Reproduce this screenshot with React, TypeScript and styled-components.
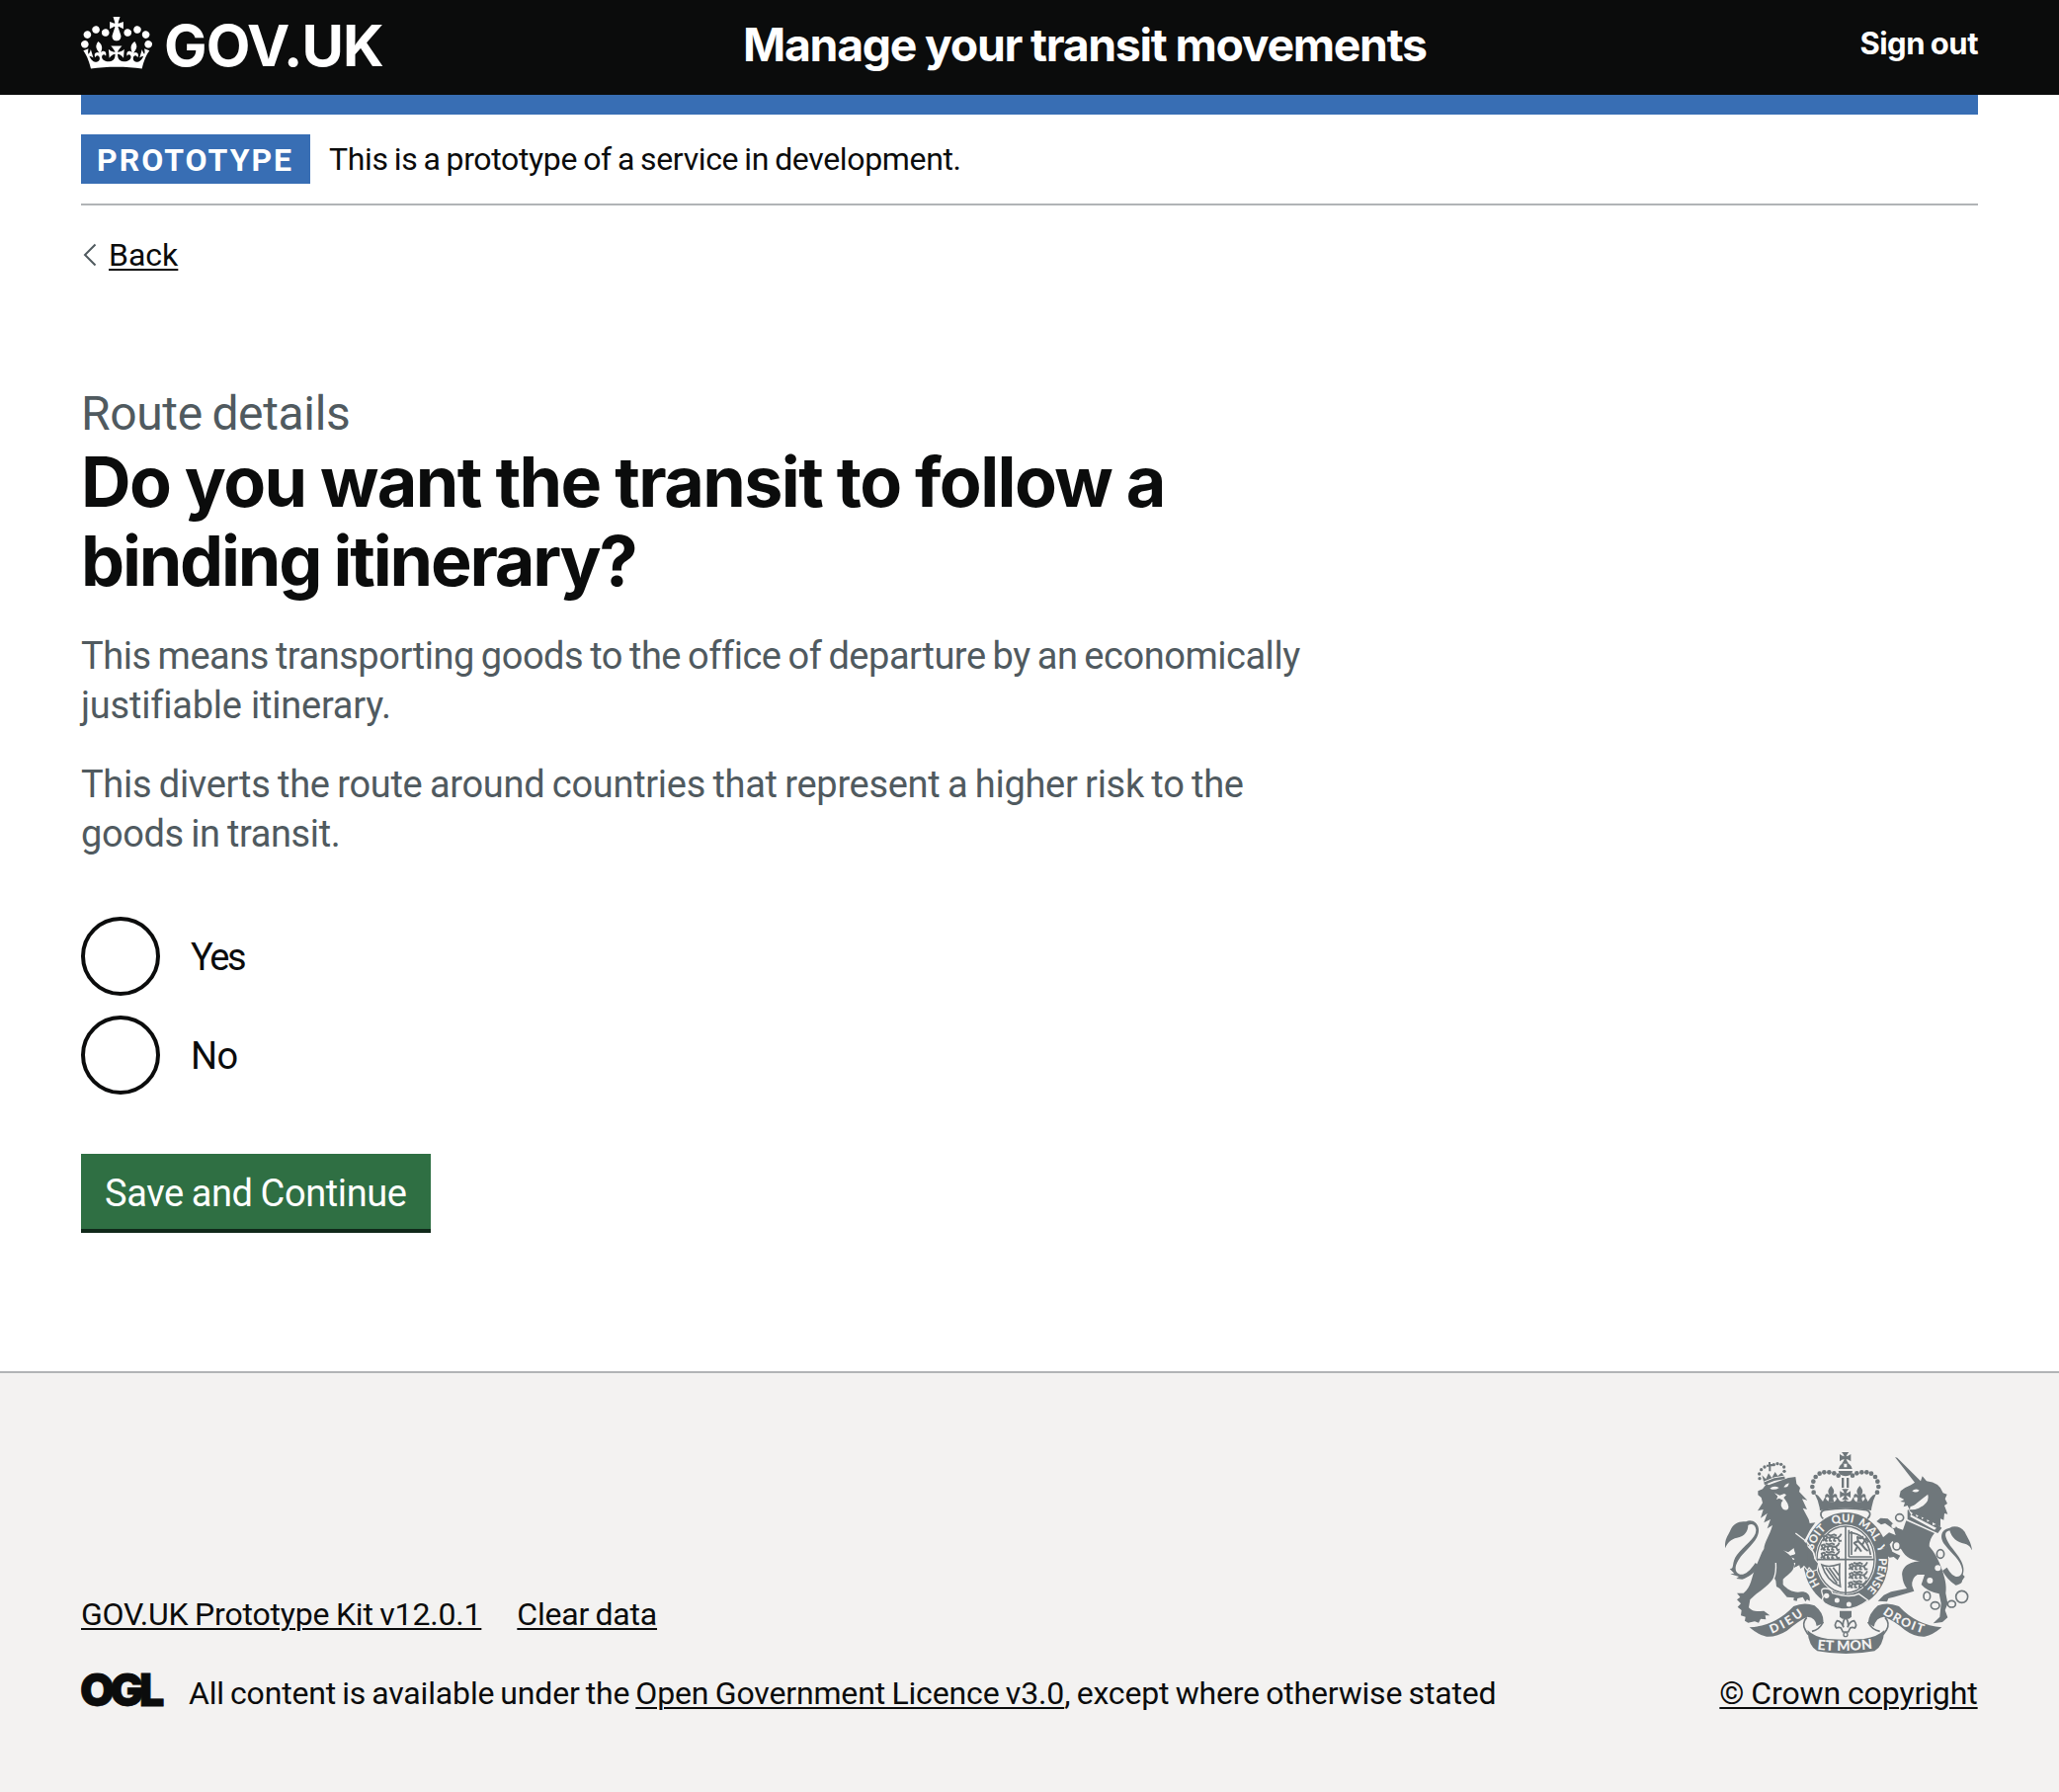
import React from "react";
import styled, { createGlobalStyle } from "styled-components";

const ink = "#0b0c0c";
const secondary = "#505a5f";
const blue = "#386eb4";
const border = "#b1b4b6";
const crestGrey = "#6f777b";
const footerBg = "#f3f2f1";

const GlobalStyle = createGlobalStyle`
  *, *::before, *::after { box-sizing: border-box; }
  body {
    margin: 0;
    background: #fff;
    color: ${ink};
    font-family: Roboto, "Liberation Sans", sans-serif;
    font-size: 32px;
    line-height: 40px;
    -webkit-font-smoothing: antialiased;
  }
  h1, p, ul { margin: 0; padding: 0; }
`;

/* A run of text with its own tracking (letters) and word gap. */
const Run = styled.span<{ $track?: number; $gap?: number; $block?: boolean }>`
  display: ${(p) => (p.$block ? "block" : "inline")};
  white-space: ${(p) => (p.$block ? "nowrap" : "pre-wrap")};
  letter-spacing: ${(p) => p.$track ?? 0}px;
  word-spacing: ${(p) => p.$gap ?? 0}px;
`;

const Page = styled.div`
  display: flex;
  flex-direction: column;
  min-height: 1814px;
`;

const Header = styled.header`
  display: flex;
  align-items: flex-start;
  height: 96px;
  padding: 0 82px;
  background: ${ink};
  color: #fff;
  font-family: Inter, "Liberation Sans", sans-serif;
  font-weight: 700;
`;

const Logo = styled.a`
  display: flex;
  align-items: flex-start;
  width: 670px;
  gap: 12px;
  padding-top: 16px;
  font-size: 58px;
  line-height: 60px;
  letter-spacing: -0.9px;

  svg {
    margin-top: 1px;
  }
`;

const ServiceName = styled.a`
  padding-top: 21px;
  font-size: 46.4px;
  line-height: 49px;
  white-space: nowrap;
`;

const SignOut = styled.a`
  margin-left: auto;
  padding-top: 24px;
  font-size: 31px;
  white-space: nowrap;
`;

const Container = styled.div`
  margin: 0 82px;
`;

const BlueBar = styled.div`
  height: 20px;
  background: ${blue};
`;

const PhaseBanner = styled.div`
  display: flex;
  gap: 19px;
  padding: 20px 0;
  border-bottom: 2px solid ${border};
  line-height: 50px;
`;

const Tag = styled.strong`
  width: 232px;
  height: 50px;
  padding-left: 16px;
  background: ${blue};
  color: #fff;
  font-weight: 700;
  line-height: 52px;
  letter-spacing: 2px;
`;

const Link = styled.a`
  color: ${ink};
  text-decoration: underline;
  text-decoration-thickness: 2px;
  text-underline-offset: 3px;
`;

const BackLink = styled.div`
  display: flex;
  align-items: center;
  gap: 12px;
  margin-top: 30px;

  svg {
    margin-left: 2px;
  }
`;

const Main = styled.main`
  padding: 111px 0 140px;
`;

const Caption = styled.span`
  display: block;
  color: ${secondary};
  font-size: 48px;
  line-height: 59px;
`;

const Heading = styled.h1`
  font-family: Inter, "Liberation Sans", sans-serif;
  font-size: 70px;
  font-weight: 700;
  line-height: 80px;
`;

const Hint = styled.div`
  display: grid;
  gap: 30px;
  margin-top: 31px;
  color: ${secondary};
  font-size: 38px;
  line-height: 50px;
`;

const Radios = styled.div`
  display: grid;
  gap: 20px;
  margin-top: 59px;
`;

const RadioRow = styled.label`
  display: flex;
  gap: 31px;
  height: 80px;
  font-size: 38px;
  line-height: 82px;
`;

const RadioInput = styled.input`
  appearance: none;
  width: 80px;
  height: 80px;
  margin: 0;
  border: 4px solid ${ink};
  border-radius: 50%;
  background: transparent;
`;

const Button = styled.button`
  display: block;
  width: 354px;
  height: 80px;
  margin: 60px 0 0;
  padding: 2px 0 0 24px;
  border: 0;
  border-bottom: 4px solid #10291a;
  background: #2f6f43;
  color: #fff;
  font: 400 38px/76px Roboto, "Liberation Sans", sans-serif;
  text-align: left;
`;

const Footer = styled.footer`
  display: flex;
  flex: 1;
  align-items: flex-start;
  justify-content: space-between;
  padding: 80px 82px;
  border-top: 2px solid ${border};
  background: ${footerBg};
`;

const FooterMeta = styled.div`
  display: flex;
  flex-direction: column;
  justify-content: flex-end;
  gap: 40px;
  height: 264px;
`;

const FooterLinks = styled.div`
  display: flex;
  gap: 36px;
`;

const Licence = styled.div`
  display: flex;
  align-items: flex-start;
`;

const OglMark = styled.span`
  width: 110px;
  margin-left: -1px;
  font-family: Inter, "Liberation Sans", sans-serif;
  font-size: 45px;
  font-weight: 900;
  line-height: 34px;
  letter-spacing: -4.4px;
  -webkit-text-stroke: 0.8px ${ink};
`;

const Copyright = styled.div`
  display: flex;
  flex-direction: column;
  align-items: center;
  gap: 20px;
  width: 262px;
  white-space: nowrap;
`;

const Crown = () => (
  <svg width="72" height="53" viewBox="0 0 132 97" fill="#fff">
    <path d="M25 30.2c3.5 1.5 7.7-.2 9.1-3.7 1.5-3.6-.2-7.8-3.9-9.2-3.6-1.4-7.6.3-9.1 3.9-1.4 3.5.3 7.5 3.9 9zM9 39.5c3.6 1.5 7.8-.2 9.2-3.7 1.5-3.6-.2-7.8-3.9-9.1-3.6-1.5-7.6.2-9.1 3.8-1.4 3.5.3 7.5 3.8 9zM4.4 57.2c3.5 1.5 7.7-.2 9.1-3.8 1.5-3.6-.2-7.7-3.9-9.1-3.5-1.5-7.6.3-9.1 3.8-1.4 3.5.3 7.6 3.9 9.1zm38.3-21.4c3.5 1.5 7.7-.2 9.1-3.8 1.5-3.6-.2-7.7-3.9-9.1-3.6-1.5-7.6.3-9.1 3.8-1.3 3.6.4 7.7 3.9 9.1zm64.4-5.6c-3.6 1.5-7.8-.2-9.1-3.7-1.5-3.6.2-7.8 3.8-9.2 3.6-1.4 7.7.3 9.2 3.9 1.3 3.5-.4 7.5-3.9 9zm15.9 9.3c-3.6 1.5-7.7-.2-9.1-3.7-1.5-3.6.2-7.8 3.7-9.1 3.6-1.5 7.7.2 9.2 3.8 1.5 3.5-.3 7.5-3.8 9zm4.7 17.7c-3.6 1.5-7.8-.2-9.2-3.8-1.5-3.6.2-7.7 3.9-9.1 3.6-1.5 7.7.3 9.2 3.8 1.3 3.5-.4 7.6-3.9 9.1zM89.3 35.8c-3.6 1.5-7.8-.2-9.2-3.8-1.4-3.6.2-7.7 3.9-9.1 3.6-1.5 7.7.3 9.2 3.8 1.4 3.6-.3 7.7-3.9 9.1zM69.7 17.7l8.9 4.7V9.3l-8.9 2.8c-.2-.3-.5-.6-.9-.9L72.4 0H59.6l3.5 11.2c-.3.3-.6.5-.9.9l-8.8-2.8v13.1l8.8-4.7c.3.3.6.7.9.9l-5 15.4v.1c-.2.8-.4 1.6-.4 2.4 0 4.1 3.1 7.5 7 8.1h.2c.3 0 .7.1 1 .1.4 0 .7 0 1-.1h.2c4-.6 7.1-4.1 7.1-8.1 0-.8-.1-1.7-.4-2.4V34l-5.1-15.4c.4-.2.7-.6 1-.9zM66 92.8c16.9 0 32.8 1.1 47.1 3.2 4-16.9 8.9-26.7 14-33.5l-9.6-3.4c1 4.9 1.1 7.2 0 10.2-1.5-1.4-3-4.3-4.2-8.7L108.6 76c2.8-2 5-3.2 7.5-3.3-4.4 9.4-10 11.9-13.6 11.2-4.3-.8-6.3-4.6-5.6-7.9 1-4.7 5.7-5.9 8-.5 4.3-8.7-3-11.4-7.6-8.8 7.1-7.2 7.9-13.5 2.1-21.1-8 6.1-8.1 12.3-4.5 20.8-4.7-5.4-12.1-2.5-9.5 6.2 3.4-5.2 7.9-2 7.2 3.1-.6 4.3-6.4 7.8-13.5 7.2-10.3-.9-10.9-8-11.2-13.8 2.5-.5 7.1 1.8 11 7.3L80.2 60c-4.1 4.4-8 5.3-12.3 5.4 1.4-4.4 8-11.6 8-11.6H55.5s6.4 7.2 7.9 11.6c-4.2-.1-8-1-12.3-5.4l1.4 16.4c3.9-5.5 8.5-7.7 10.9-7.3-.3 5.8-.9 12.8-11.1 13.8-7.2.6-12.9-2.9-13.5-7.2-.7-5 3.8-8.3 7.1-3.1 2.7-8.7-4.6-11.6-9.4-6.2 3.7-8.5 3.6-14.7-4.6-20.8-5.8 7.6-5 13.9 2.2 21.1-4.7-2.6-11.9.1-7.7 8.8 2.3-5.5 7.1-4.2 8.1.5.7 3.3-1.3 7.1-5.7 7.9-3.5.7-9-1.8-13.5-11.2 2.5.1 4.7 1.3 7.5 3.3l-4.7-15.4c-1.2 4.4-2.7 7.2-4.3 8.7-1.1-3-.9-5.3 0-10.2l-9.5 3.4c5 6.9 9.9 16.7 14 33.5 14.8-2.1 30.8-3.2 47.7-3.2z" />
  </svg>
);

const archBeads: [number, number][] = [
  [317, 182], [313, 165], [316, 149], [323, 135], [335, 125], [349, 121], [364, 121], [379, 124], [392, 131],
];

const lionCrownBeads: [number, number][] = [
  [153, 140], [152, 126], [158, 113], [168, 105], [196, 98], [207, 95], [218, 97], [227, 105], [228, 118],
];

const CrownCross = ({ x, y, s = 1 }: { x: number; y: number; s?: number }) => (
  <path
    transform={`translate(${x} ${y}) scale(${s})`}
    d="M-11-17H11Q4-10 3-4Q10-5 17-11V11Q10 5 3 4Q4 10 11 18H-11Q-4 10-3 4Q-10 5-17 11V-11Q-10-5-3-4Q-4-10-11-17z"
  />
);

const Fleur = ({ x, y }: { x: number; y: number }) => (
  <path
    transform={`translate(${x} ${y})`}
    d="M0-24C12-10 10-4 4 6C12-4 22 2 17 14C13 8 9 8 6 14L9 26H-9L-6 14C-9 8-13 8-17 14C-22 2-12-4-4 6C-10-4-12-10 0-24z"
  />
);

/* One walking lion of a shield quarter. */
const Leopard = ({ x, y }: { x: number; y: number }) => (
  <path
    transform={`translate(${x} ${y})`}
    fill="none"
    stroke={crestGrey}
    strokeWidth="5.5"
    strokeLinejoin="round"
    d="M0 12L5 6L2-2L10-5L14 2L30 0L44 3L52-3L56-10M12 2L8 11L14 12M22 2L20 11L27 12M36 2L33 11L40 12M46 3L50 12L57 11M14-8L24-5L34-8L42-4"
  />
);

const Crest = () => (
  <svg width="250" height="204" viewBox="48 60 750 612" fill={crestGrey}>
    {/* lion: tail */}
    <path d="M48 352C46 324 58 312 64 298C72 276 92 268 112 271C126 262 148 272 150 294C152 322 124 345 100 372C80 396 72 420 90 430C104 436 122 424 140 396L150 404C138 428 118 440 100 446L82 444L90 438L64 430L76 428L62 414C78 416 66 396 84 372C104 344 143 322 142 296C140 280 128 276 118 282C118 300 108 316 84 320C66 324 54 336 48 352z" />
    {/* lion: body */}
    <path d="M148 178L162 172L174 156L180 160Q212 148 240 138L262 135L265 156L276 168L273 180L298 206L282 202L297 234L284 230L302 264L305 276L322 274L306 296L288 330L300 345L316 366L318 384L300 416L290 404L277 414L274 402L258 410L262 396L246 396L260 384L244 376L262 370L258 350L240 364L224 358C238 366 258 380 258 402C258 424 232 436 224 446L224 462C238 478 256 488 280 484C298 484 308 494 305 512L297 507L292 514L284 500L268 504L266 512L256 510L257 502L236 500L214 474L204 468L202 450L196 440C180 468 144 486 124 508L120 532C134 548 148 542 166 542L184 556L170 556L172 568L156 566L150 578L138 574L118 578L108 572L110 560L96 556L98 540L86 530L96 520L84 508L94 500L84 488L104 488C128 470 128 440 140 412C146 396 154 380 160 364L166 354C168 332 184 312 192 282L176 292L186 264L166 274L176 246L156 260L164 234L147 238L162 214L158 198L148 190z" />
    <path fill={footerBg} d="M184 170Q196 160 212 168Q198 178 184 170zM226 166Q232 156 242 154Q240 170 226 166zM198 184L214 191L228 186L234 190L226 198L232 206Q246 224 238 234Q224 240 218 222Q218 210 224 206L212 200L204 204L208 194z" />
    <path fill="none" stroke={footerBg} strokeWidth="4" d="M202 396Q204 424 196 444" />
    {/* lion: crown */}
    <path d="M168 160L160 130L172 142L180 124L190 138L200 120L208 132L220 122L229 134L230 142Q196 144 168 160zM180 90H186V96H193V103H187V118H181V104H174V98H180z" />
    <path fill="none" stroke={footerBg} strokeWidth="3" d="M166 150Q196 134 230 132" />
    {lionCrownBeads.map(([x, y]) => (
      <circle key={`${x}-${y}`} cx={x} cy={y} r="5" />
    ))}

    {/* crown above the garter */}
    <CrownCross x={413} y={77} />
    <path d="M393 111Q396 96 409 94V106H418V94Q431 96 434 111zM392 117H435Q434 132 414 133Q394 132 392 117zM402 138H409V168H402zM417 138H424V168H417z" />
    {archBeads.map(([x, y]) => (
      <g key={`${x}-${y}`}>
        <circle cx={x} cy={y} r="7" />
        <circle cx={827 - x} cy={y} r="7" />
      </g>
    ))}
    <CrownCross x={413} y={188} s={0.95} />
    <Fleur x={370} y={186} />
    <Fleur x={457} y={186} />
    <path d="M320 186Q332 190 336 198L345 210L352 196Q358 214 374 212Q386 212 388 196L396 208Q406 214 413 204Q420 214 431 208L438 196Q440 212 452 212Q470 214 474 196L482 210L490 198Q494 190 507 186Q494 212 492 237Q414 222 336 237Q334 212 320 186z" />
    <path fill="none" stroke={crestGrey} strokeWidth="5" d="M346 262C334 252 338 238 350 236Q414 226 478 236C490 240 492 252 480 262" />

    {/* garter */}
    <ellipse cx="415" cy="388" rx="129" ry="145" />
    <ellipse cx="414" cy="386" rx="92" ry="106" fill={footerBg} />
    <ellipse cx="414" cy="386" rx="87" ry="101" fill="none" stroke={crestGrey} strokeWidth="4" />
    <path fill="none" stroke={crestGrey} strokeWidth="5" d="M414 286V492M327 386H501M424 296V378M432 300V372M424 378H494M424 304Q478 306 490 372" />
    <Leopard x={345} y={318} />
    <Leopard x={339} y={345} />
    <Leopard x={339} y={370} />
    <Leopard x={424} y={404} />
    <Leopard x={424} y={431} />
    <Leopard x={422} y={459} />
    <path fill="none" stroke={crestGrey} strokeWidth="6" strokeLinejoin="round" d="M442 362L450 346L440 336L452 330L464 342L476 322L484 334M452 330L450 318L460 322L468 316M464 342L474 354L482 360M452 348L462 362" />
    <path fill="none" stroke={crestGrey} strokeWidth="5" d="M342 402Q362 412 396 400Q394 440 398 468Q356 450 342 402zM354 410L388 458M364 411L392 450M376 410L394 434" />
    <defs>
      <path id="garterArc" d="M336.6 462.6A101 116 0 0 1 313 388A101 116 0 0 1 515 388A101 116 0 0 1 464.5 488.5" />
      <path id="mottoLeft" d="M190 611Q238 594 300 545" />
      <path id="mottoMid" d="M328 659Q415 668 508 655" />
      <path id="mottoRight" d="M526 550Q584 594 670 616" />
    </defs>
    <g fill={footerBg} fontFamily='Lato, "Liberation Sans", sans-serif' fontWeight="900" fontSize="34">
      <text><textPath href="#garterArc" startOffset="0">HO</textPath></text>
      <text><textPath href="#garterArc" startOffset="109">SOIT</textPath></text>
      <text><textPath href="#garterArc" startOffset="210">QUI</textPath></text>
      <text><textPath href="#garterArc" startOffset="288">MAL</textPath></text>
      <text><textPath href="#garterArc" startOffset="376">Y</textPath></text>
      <text><textPath href="#garterArc" startOffset="414">PENSE</textPath></text>
    </g>
    {/* buckle and strap end */}
    <path stroke={footerBg} strokeWidth="4" d="M342 486Q338 474 352 474Q372 474 374 488Q428 504 454 490L482 510Q442 542 400 536Q366 530 350 518Q340 510 346 500z" />
    <g fill={footerBg}>
      <circle cx="388" cy="510" r="7.5" />
      <circle cx="424" cy="522" r="7.5" />
      <circle cx="356" cy="496" r="8" />
    </g>
    {/* lion's forepaw over the garter */}
    <path stroke={footerBg} strokeWidth="7" paintOrder="stroke" d="M290 338L316 366L320 386L330 398L326 416L314 420L303 408L298 416L288 404z" />
    <path d="M262 308L298 340L300 410L288 404L276 412L274 402L258 410L262 396L246 394L262 384L244 376L262 370L256 350z" />
    <path fill="none" stroke={footerBg} strokeWidth="4" d="M262 306L298 334Q318 358 321 384" />

    {/* unicorn: tail */}
    <path d="M798 358C796 334 784 320 776 302C764 286 744 282 730 290C700 296 700 322 716 342C736 368 764 388 768 416C770 440 744 452 722 410L708 420C722 446 738 456 748 464C760 462 768 458 768 450L776 438L770 432C782 400 750 368 732 344C716 320 710 302 730 298C736 320 752 334 776 338C790 342 794 350 798 358z" />
    {/* unicorn: head and horn */}
    <path d="M564 75L571 77L642 148L647 133L660 148Q700 152 710 184L722 188L716 202L723 216L714 222L724 248L714 246L712 266L702 262V286L690 280Q660 262 618 246L606 236L640 224Q662 206 664 188Q640 206 626 218L608 234L602 222L590 226L594 212L580 210L592 204L577 196L581 178Q596 166 612 160L624 152z" />
    <path fill={footerBg} d="M616 178Q626 168 638 176Q628 186 616 178zM610 226Q642 218 664 190Q670 214 636 230Q620 236 610 234z" />
    {/* unicorn: collar */}
    <path fill={footerBg} d="M602 232L618 256L690 288L704 300L690 306L600 266z" />
    <path d="M604 234L614 252L622 238L630 258L642 246L646 264L660 252L662 272L678 262L678 282L692 278L706 290L694 306L602 264V236zM610 256L684 296L690 290L612 250z" />
    {/* unicorn: body */}
    <path d="M598 268L684 306Q668 324 668 346Q692 372 708 420C714 440 722 462 718 488L724 520L716 540L724 562L708 576L680 580L700 560L704 520L698 490Q660 482 644 462L654 432L632 432Q614 442 616 466L622 482L560 500L544 504L540 514L512 512L530 494L552 484L600 474Q588 460 586 436C582 404 616 388 652 392Q600 390 584 356L556 330L548 340L556 362L580 374L572 388L560 378L548 380L530 366L522 354L538 350L524 322L546 304L566 312L560 294L534 276L522 280L508 270L520 260L542 262L572 290L588 296z" />
    <g fill={footerBg}>
      <circle cx="670" cy="450" r="9" />
      <circle cx="694" cy="412" r="9" />
      <circle cx="560" cy="284" r="7" />
    </g>
    {/* chain */}
    <g fill="none" stroke={crestGrey} strokeWidth="5">
      <ellipse cx="578" cy="259" rx="12" ry="11" />
      <ellipse cx="569" cy="344" rx="11" ry="13" fill={footerBg} />
      <ellipse cx="702" cy="369" rx="11" ry="13" fill={footerBg} />
      <ellipse cx="661" cy="497" rx="10" ry="13" />
      <ellipse cx="686" cy="526" rx="13" ry="11" />
      <ellipse cx="736" cy="521" rx="12" ry="10" />
      <circle cx="767" cy="499" r="18" />
    </g>

    {/* fleur-de-lis under the garter */}
    <path d="M396 542H432V560L424 566H404L396 560z" />
    <path fill="none" stroke={crestGrey} strokeWidth="5" d="M414 562Q402 576 408 592Q400 572 388 572Q378 584 386 594Q394 590 400 594L406 606H422L428 594Q434 590 442 594Q450 584 440 572Q428 572 420 592Q426 576 414 562z" />
    <circle cx="414" cy="614" r="6" fill="none" stroke={crestGrey} strokeWidth="4" />

    {/* motto ribbon */}
    <path d="M122 592Q200 588 256 528Q288 514 320 526Q350 550 346 580L326 588Q324 562 298 560Q274 570 236 602Q204 622 174 620Q150 616 122 592z" />
    <path d="M706 592Q630 586 576 528Q540 514 512 526Q484 550 482 580L500 590Q506 562 530 560Q560 570 594 600Q624 622 654 620Q678 616 706 592z" />
    <path fill="none" stroke={crestGrey} strokeWidth="5" d="M296 562Q280 580 292 600L300 614M346 576Q334 600 312 604M534 562Q550 580 538 600L528 614M482 576Q494 600 518 604" />
    <path d="M298 600Q320 622 360 627Q415 632 470 627Q512 620 532 600Q528 650 502 664Q460 672 415 672Q370 672 328 664Q302 650 298 600z" />
    <g fill={footerBg} fontFamily='Lato, "Liberation Sans", sans-serif' fontWeight="900" fontSize="37">
      <text><textPath href="#mottoLeft" textLength="112">DIEU</textPath></text>
      <text fontSize="42"><textPath href="#mottoMid" textLength="168">ET MON</textPath></text>
      <text><textPath href="#mottoRight" textLength="136">DROIT</textPath></text>
    </g>
  </svg>
);

export default function App() {
  return (
    <>
      <GlobalStyle />
      <Page>
        <Header>
          <Logo>
            <Crown />
            GOV.UK
          </Logo>
          <ServiceName>
            <Run $track={-1.3} $gap={-0.8}>Manage your transit movements</Run>
          </ServiceName>
          <SignOut>
            <Run $track={-0.5} $gap={-1}>Sign out</Run>
          </SignOut>
        </Header>

        <Container>
          <BlueBar />
          <PhaseBanner>
            <Tag>PROTOTYPE</Tag>
            <Run $track={-0.35} $gap={-1.5}>This is a prototype of a service in development.</Run>
          </PhaseBanner>

          <BackLink>
            <svg width="14" height="24" viewBox="0 0 14 24" fill="none" stroke={secondary} strokeWidth="2">
              <path d="M12.5 1.5L2 12l10.5 10.5" />
            </svg>
            <Link>Back</Link>
          </BackLink>

          <Main>
            <Caption>
              <Run $track={-0.35} $gap={-2}>Route details</Run>
            </Caption>
            <Heading>
              <Run $block $track={-1.6} $gap={-0.4}>Do you want the transit to follow a</Run>
              <Run $block $track={-2.2} $gap={-1}>binding itinerary?</Run>
            </Heading>

            <Hint>
              <p>
                <Run $block $track={-0.47} $gap={-2}>
                  This means transporting goods to the office of departure by an economically
                </Run>
                <Run $block $track={-0.22}>justifiable itinerary.</Run>
              </p>
              <p>
                <Run $block $track={-0.3} $gap={-1.6}>
                  This diverts the route around countries that represent a higher risk to the
                </Run>
                <Run $block $track={-0.4} $gap={-1.6}>goods in transit.</Run>
              </p>
            </Hint>

            <Radios>
              <RadioRow>
                <RadioInput type="radio" name="binding" />
                <Run $track={-2.4}>Yes</Run>
              </RadioRow>
              <RadioRow>
                <RadioInput type="radio" name="binding" />
                <Run $track={-0.5}>No</Run>
              </RadioRow>
            </Radios>

            <Button>
              <Run $track={-0.4} $gap={-1}>Save and Continue</Run>
            </Button>
          </Main>
        </Container>

        <Footer>
          <FooterMeta>
            <FooterLinks>
              <Link><Run $track={-0.18} $gap={-1.2}>GOV.UK Prototype Kit v12.0.1</Run></Link>
              <Link><Run $track={-0.2} $gap={-1.4}>Clear data</Run></Link>
            </FooterLinks>
            <Licence>
              <OglMark>OGL</OglMark>
              <p>
                <Run $track={-0.15} $gap={-1.8}>{"All content is available under the "}</Run>
                <Link><Run $track={-0.15} $gap={-1.4}>Open Government Licence v3.0</Run></Link>
                <Run $track={-0.2} $gap={-1.3}>, except where otherwise stated</Run>
              </p>
            </Licence>
          </FooterMeta>
          <Copyright>
            <Crest />
            <Link><Run $track={-0.1} $gap={-1}>© Crown copyright</Run></Link>
          </Copyright>
        </Footer>
      </Page>
    </>
  );
}
